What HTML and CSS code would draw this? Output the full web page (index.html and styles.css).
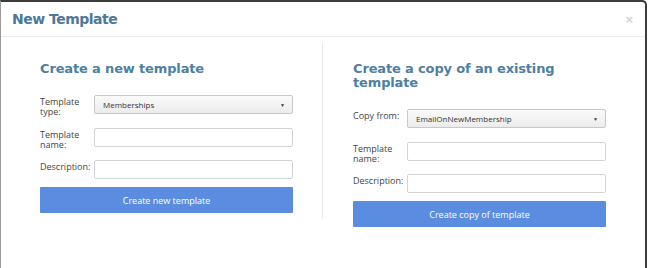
FILE: index.html
```html
<!DOCTYPE html>
<html>
<head>
<meta charset="utf-8">
<link rel="stylesheet" href="styles.css">
</head>
<body>
<div class="modal">
  <div class="modal-header">
    <h1 class="modal-title">New Template</h1>
    <span class="close">&times;</span>
  </div>
  <div class="modal-body">
    <div class="col">
      <h2 class="col-title">Create a new template</h2>
      <div class="row">
        <label class="lbl">Template type:</label>
        <div class="select"><span>Memberships</span><span class="caret">&#9660;</span></div>
      </div>
      <div class="row">
        <label class="lbl">Template name:</label>
        <div class="input"></div>
      </div>
      <div class="row last">
        <label class="lbl">Description:</label>
        <div class="input"></div>
      </div>
      <div class="btn">Create new template</div>
    </div>
    <div class="divider"></div>
    <div class="col">
      <h2 class="col-title">Create a copy of an existing template</h2>
      <div class="row">
        <label class="lbl">Copy from:</label>
        <div class="select"><span>EmailOnNewMembership</span><span class="caret">&#9660;</span></div>
      </div>
      <div class="row">
        <label class="lbl">Template name:</label>
        <div class="input"></div>
      </div>
      <div class="row last">
        <label class="lbl">Description:</label>
        <div class="input"></div>
      </div>
      <div class="btn">Create copy of template</div>
    </div>
  </div>
</div>
</body>
</html>
```
FILE: styles.css
```css
html, body {
  margin: 0;
  padding: 0;
  background: #ffffff;
}
body {
  width: 649px;
  height: 268px;
  overflow: hidden;
  font-family: "Open Sans", "Noto Sans", sans-serif;
}
.modal {
  width: 644px;
  height: 266px;
  border-top: 2px solid #3c3c3c;
  border-left: 1px solid #9a9a9a;
  border-right: 2px solid #3c3c3c;
  border-top-right-radius: 5px;
  background: #fff;
}
.modal-header {
  height: 34px;
  border-bottom: 1px solid #ececec;
  display: flex;
  align-items: center;
  justify-content: space-between;
  padding: 0 11px 0 11px;
}
.modal-title {
  margin: 0;
  font-family: "DejaVu Sans", Verdana, sans-serif;
  font-weight: bold;
  font-size: 14px;
  color: #4d7898;
  letter-spacing: -0.5px;
}
.close {
  color: #cfcfcf;
  font-size: 11px;
  font-family: "DejaVu Sans", sans-serif;
  font-weight: bold;
}
.modal-body {
  display: grid;
  grid-template-columns: 253px 2px 253px;
  column-gap: 29px;
  padding: 6px 0 0 39px;
  align-items: start;
}
.divider {
  height: 176px;
  border-left: 1px solid #e9e9e9;
}
.col {
  padding-top: 19px;
}
.col-title {
  margin: 0 0 19px 0;
  font-family: "DejaVu Sans", Verdana, sans-serif;
  font-weight: bold;
  font-size: 13px;
  line-height: 14px;
  color: #4f7fa1;
  letter-spacing: -0.15px;
}
.row {
  display: flex;
  align-items: flex-start;
  min-height: 22px;
  margin-bottom: 10px;
}
.row:nth-of-type(1) {
  margin-bottom: 11px;
}
.row.last {
  min-height: 0;
  margin-bottom: 8px;
}
.lbl {
  width: 54px;
  flex: none;
  font-size: 9px;
  line-height: 10px;
  color: #444;
  padding-top: 2px;
}
.select, .input {
  flex: 1;
  height: 19px;
  box-sizing: border-box;
  border: 1px solid #d4d4d4;
  border-radius: 2px;
  background: #fff;
}
.select {
  background: linear-gradient(#fafafa, #ececec);
  border-color: #c8c8c8;
  display: flex;
  align-items: center;
  justify-content: space-between;
  padding: 0 7px 0 8px;
  font-size: 8px;
  color: #333;
}
.caret {
  font-size: 5px;
  color: #333;
}
.btn {
  height: 26px;
  background: #5a8de0;
  border-radius: 1px;
  color: #fff;
  font-size: 9px;
  display: flex;
  align-items: center;
  justify-content: center;
}
```
